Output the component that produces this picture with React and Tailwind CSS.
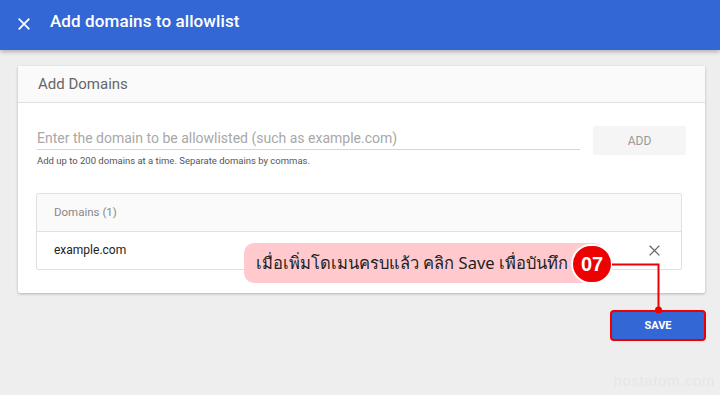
import React from "react";

const CloseIcon = ({ className, w = 2.2 }) => (
  <svg viewBox="0 0 24 24" className={className} fill="none" stroke="currentColor" strokeWidth={w} strokeLinecap="square">
    <path d="M5 5l14 14M19 5L5 19" />
  </svg>
);

const App = () => {
  return (
    <div className="relative w-[720px] h-[395px] overflow-hidden bg-[#eeeeee] font-['Roboto',sans-serif]">
      {/* top bar */}
      <div className="h-[50px] bg-[#3367d6] flex items-center shadow-[0_2px_4px_rgba(0,0,0,0.25)] relative z-10">
        <CloseIcon className="w-[16px] h-[16px] text-white ml-[16px] -mt-[3px]" w={2.6} />
        <h1 className="ml-[18px] text-white text-[17px] font-medium tracking-[0.1px] -mt-[6px]">
          Add domains to allowlist
        </h1>
      </div>

      <div className="pt-[16px] pl-[18px] pr-[15px]">
        {/* card */}
        <div className="bg-white rounded-[2px] shadow-[0_1px_3px_rgba(0,0,0,0.25)]">
          <div className="h-[37px] bg-[#fafafa] border-b border-[#e0e0e0] flex items-center px-[20px]">
            <span className="text-[15px] text-[#666666]">Add Domains</span>
          </div>

          <div className="pl-[19px] pr-[19px] pt-[23px] pb-[23px]">
            <div className="flex items-start gap-[13px]">
              <div className="flex-1">
                <div className="h-[23px] border-b border-[#d6d6d6] flex items-center mt-[1px]">
                  <span className="text-[14px] text-[#a8a8a8]">
                    Enter the domain to be allowlisted (such as example.com)
                  </span>
                </div>
                <div className="text-[9.5px] text-[#555555] mt-[4px]">
                  Add up to 200 domains at a time. Separate domains by commas.
                </div>
              </div>
              <button className="w-[93px] h-[29px] bg-[#f5f5f5] rounded-[2px] text-[12px] text-[#999999]">
                ADD
              </button>
            </div>

            <div className="mt-[25px] mr-[4px] -ml-[1px] border border-[#e0e0e0] rounded-[2px]">
              <div className="h-[38px] bg-[#fafafa] border-b border-[#e0e0e0] flex items-center px-[17px]">
                <span className="text-[11.5px] text-[#888888]">Domains (1)</span>
              </div>
              <div className="h-[37px] flex items-center justify-between px-[17px]">
                <span className="text-[12px] text-[#222222] -mt-[1px]">example.com</span>
                <CloseIcon className="w-[15px] h-[15px] text-[#666666] mr-[2px] -mt-[1px]" />
              </div>
            </div>
          </div>
        </div>

        <div className="flex justify-end mt-[17px] -mr-[1px]">
          <button className="w-[96px] h-[31px] bg-[#3367d6] border-2 border-[#ee0000] rounded-[4px] text-white text-[11px] font-bold">
            SAVE
          </button>
        </div>
      </div>

      {/* annotation */}
      <div className="absolute left-[244px] top-[243px] w-[360px] h-[40px] bg-[#ffc9cd] rounded-[10px] flex items-center pl-[12px]">
        <span className="text-[16.5px] text-[#222222] font-['Noto_Sans','DejaVu_Sans',sans-serif]">
          เมื่อเพิ่มโดเมนครบแล้ว คลิก Save เพื่อบันทึก
        </span>
      </div>
      <div className="absolute left-[571px] top-[244px] w-[42px] h-[40px] rounded-full bg-[#ee0000] border-2 border-white flex items-center justify-center">
        <span className="text-white text-[20px] font-bold font-['Liberation_Sans',sans-serif]">07</span>
      </div>
      <svg className="absolute left-0 top-0" width="720" height="395">
        <path d="M612 264.5H658.5V310" stroke="#ee0000" strokeWidth="2" fill="none" />
        <circle cx="658.5" cy="310" r="3.5" fill="#ee0000" />
      </svg>

      {/* watermark */}
      <div className="absolute right-[5px] bottom-[3px] text-[15px] text-[#e6e6e6] font-['Liberation_Sans',sans-serif] tracking-[0.6px]">
        hostatom.com
      </div>
    </div>
  );
};

export default App;
